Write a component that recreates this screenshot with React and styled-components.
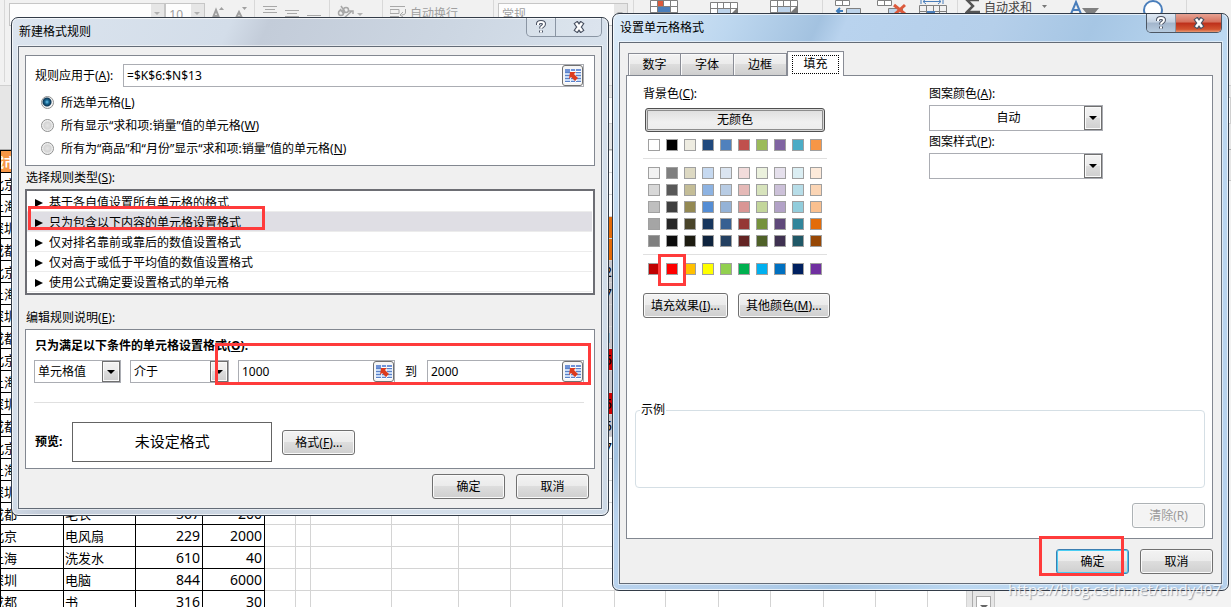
import { useState } from 'react';
import styled, { createGlobalStyle, css } from 'styled-components';

const GlobalStyle = createGlobalStyle`
  * {
    box-sizing: border-box;
  }
  body {
    margin: 0;
    overflow: hidden;
    font-family: "Noto Sans", "Noto Sans CJK SC", sans-serif;
    font-size: 12px;
    line-height: 16px;
    color: #000;
  }
  button, input, select {
    font: inherit;
    color: inherit;
    margin: 0;
  }
`;

/* ---------- workbook behind the dialogs ---------- */

const Desktop = styled.main`
  position: relative;
  height: 100vh;
  overflow: hidden;
  background: #e6e6e6;
`;

const Ribbon = styled.header`
  display: flex;
  height: 86px;
  padding-left: 4px;
  background: #f1f1f1;
  border-bottom: 1px solid #d0d0d0;
  color: #a0a0a0;
`;

const RibbonGroup = styled.div`
  display: flex;
  align-items: flex-start;
  gap: ${({ $gap }) => $gap || 0}px;
  width: ${({ $w }) => $w}px;
  height: 82px;
  padding-left: ${({ $pad }) => $pad || 4}px;
  border-left: ${({ $plain }) => ($plain ? '0' : '1px solid #d8d8d8')};
  white-space: nowrap;
  svg {
    flex: none;
  }
`;

const RibbonBox = styled.div`
  display: flex;
  justify-content: space-between;
  width: ${({ $w }) => $w}px;
  height: 23px;
  margin-top: 3px;
  padding-left: 3px;
  line-height: 22px;
  background: #fdfdfd;
  border: 1px solid #c6c6c6;
`;

const BoxArrow = styled.span`
  display: flex;
  align-items: center;
  width: 13px;
  padding-left: 3px;
  background: #e6e6e6;
  &::after {
    content: "";
    border: 3px solid transparent;
    border-top-color: #b0b0b0;
  }
`;

const RibbonLabel = styled.span`
  padding-top: ${({ $top }) => $top}px;
  color: ${({ $dark }) => ($dark ? '#444' : '#a0a0a0')};
`;

const FormulaBar = styled.div`
  height: 27px;
  margin: 11px 0 0 60px;
  background: #fff;
  border: 1px solid #d0d0d0;
`;

const ColumnHead = styled.div`
  height: 26px;
  border-bottom: 1px solid #ababab;
`;

const Work = styled.div`
  display: flex;
`;

const Sheet = styled.table`
  width: 966px;
  table-layout: fixed;
  border-collapse: collapse;
  background: #fff;
`;

const tones = {
  head: '#f79646',
  orange: '#e46c0a',
  gray: '#c9c7cc',
  red: '#d00000',
};

const Cell = styled.td`
  height: 22px;
  padding: 0 2px 0 1px;
  overflow: hidden;
  white-space: nowrap;
  font-size: ${({ $num }) => ($num ? 14 : 13)}px;
  line-height: 20px;
  text-align: ${({ $num }) => ($num ? 'right' : 'left')};
  background: ${({ $tone }) => tones[$tone] || 'transparent'};
  border: 1px solid ${({ $boxed }) => ($boxed ? '#000' : '#d4d4d4')};
  ${({ $tone }) => $tone === 'head' && css`
    color: #fff;
    font-weight: bold;
  `}
`;

const CityText = styled.span`
  display: block;
  margin-left: -11px;
`;

const ScrollTrack = styled.div`
  display: flex;
  align-items: flex-end;
  width: 23px;
  height: 462px;
  padding: 0 3px;
  background: #e6e6e6;
  border-left: 1px solid #ababab;
  border-right: 1px solid #c6c6c6;
  margin-left: 5px;
`;

const ScrollButton = styled.button`
  width: 15px;
  height: 16px;
  padding: 0;
  background: #fff;
  border: 1px solid #ababab;
`;

const FieldPane = styled.div`
  flex: 1;
  height: 432px;
  margin-top: 30px;
  background: #f3f3f3;
  border-top: 1px solid #c6c6c6;
  border-bottom: 1px solid #c6c6c6;
`;

/* ---------- window chrome ---------- */

const Window = styled.section`
  position: absolute;
  left: ${({ $x }) => $x}px;
  top: ${({ $y }) => $y}px;
  width: ${({ $w }) => $w}px;
  padding: 0 6px 6px;
  border: 1px solid #333c48;
  border-radius: 7px;
  box-shadow: inset 0 0 0 1px rgba(255, 255, 255, 0.7);
  background: ${({ $active }) => ($active
    ? 'linear-gradient(115deg, #dcebf8 0, #bdd7ef 110px, #a3c2e0 190px, #b9d3ee 215px, #b5cfea 350px, #a6c6e4 440px, #bcd8f1 560px, #b5d0ec 100%)'
    : 'linear-gradient(115deg, #dbe4ee 0, #d3dde9 200px, #c3ccd9 235px, #ccd6e2 400px, #d6e0eb 540px, #cdd9e6 100%)')};
`;

const TitleBar = styled.div`
  display: flex;
  justify-content: space-between;
  height: 28px;
`;

const Title = styled.h1`
  margin: 0;
  padding: 6px 0 0 1px;
  font-size: 12px;
  line-height: 16px;
  font-weight: normal;
`;

const Captions = styled.div`
  display: flex;
  height: 19px;
  border: 1px solid ${({ $active }) => ($active ? '#4d5764' : '#8a95a3')};
  border-top: 0;
  border-radius: 0 0 5px 5px;
  overflow: hidden;
`;

const CaptionButton = styled.button`
  display: flex;
  align-items: center;
  justify-content: center;
  width: ${({ $w }) => $w}px;
  padding: 0;
  border: 0;
  background: ${({ $tone }) => {
    if ($tone === 'red') return 'linear-gradient(#e7a293 0, #d5705c 45%, #bd2f1a 50%, #d2532f 85%, #e89b76 100%)';
    if ($tone === 'blue') return 'linear-gradient(#e0e9f3 0, #c3d1e1 45%, #a2b5cb 50%, #b7cbdf 100%)';
    return 'rgba(255, 255, 255, 0.15)';
  }};
  & + & {
    border-left: 1px solid #8a95a3;
  }
`;

const Client = styled.div`
  padding: ${({ $pad }) => $pad};
  background: #f0f0f0;
  border: 1px solid #636b76;
  box-shadow: 0 0 0 1px rgba(255, 255, 255, 0.5);
`;

const Panel = styled.div`
  padding: ${({ $pad }) => $pad};
  background: #fff;
  border: 1px solid #828790;
`;

const Footer = styled.div`
  display: flex;
  justify-content: flex-end;
  gap: 11px;
  margin-top: ${({ $top }) => $top}px;
  padding-right: ${({ $right }) => $right || 0}px;
`;

/* ---------- controls ---------- */

const Button = styled.button`
  min-width: 73px;
  height: 25px;
  padding: 1px 7px 0;
  line-height: 16px;
  white-space: nowrap;
  background: linear-gradient(#f3f3f3 0, #ebebeb 48%, #dddddd 50%, #cfcfcf 100%);
  border: 1px solid #707070;
  border-radius: 3px;
  box-shadow: inset 0 0 0 1px #fafafa;
  ${({ $default }) => $default && css`
    border-color: #3c7fb1;
    box-shadow: inset 0 0 0 1px #49cdf3;
  `}
  &:disabled {
    color: #9a9a9a;
    background: #f4f4f4;
    border-color: #adb2b5;
  }
`;

const Field = styled.div`
  position: relative;
  display: flex;
  flex: ${({ $w }) => ($w ? `0 0 ${$w}px` : '1')};
  height: ${({ $h }) => $h || 23}px;
  min-width: 0;
  background: #fff;
  border: 1px solid #abadb3;
`;

const TextInput = styled.input`
  flex: 1;
  min-width: 0;
  padding: 0 3px;
  border: 0;
  outline: 0;
  background: transparent;
`;

const Select = styled.select`
  flex: 1;
  min-width: 0;
  padding: 0 18px 0 3px;
  border: 0;
  outline: 0;
  appearance: none;
  background: transparent;
  text-align-last: ${({ $center }) => ($center ? 'center' : 'left')};
`;

/* sits over the select so that the whole field stays clickable */
const Arrow = styled.span`
  position: absolute;
  top: 0;
  right: 0;
  bottom: 0;
  display: flex;
  align-items: center;
  justify-content: center;
  width: 18px;
  pointer-events: none;
  background: linear-gradient(#f3f3f3 0, #ebebeb 48%, #dddddd 50%, #cfcfcf 100%);
  border: 1px solid #707070;
  box-shadow: inset 0 0 0 1px #fafafa;
  &::after {
    content: "";
    margin-top: 4px;
    border: 4px solid transparent;
    border-top-color: #000;
  }
`;

const PickButton = styled.button`
  display: flex;
  flex: none;
  align-items: center;
  justify-content: center;
  width: 21px;
  padding: 0;
  background: #f6f6f6;
  border: 1px solid #707070;
  border-radius: 3px;
`;

const Label = styled.label`
  display: block;
  white-space: nowrap;
`;

const Caption = styled.h2`
  margin: ${({ $top }) => $top || 0}px 0 0 1px;
  font-size: 12px;
  line-height: ${({ $line }) => $line || 23}px;
  font-weight: ${({ $bold }) => ($bold ? 'bold' : 'normal')};
  white-space: nowrap;
`;

/* ---------- rule dialog ---------- */

const ApplyRow = styled.div`
  display: flex;
  align-items: center;
  gap: 10px;
  margin-bottom: 4px;
`;

const RadioRow = styled.label`
  display: flex;
  align-items: center;
  gap: 7px;
  height: 23px;
  padding-left: 6px;
`;

const Radio = styled.input`
  appearance: none;
  width: 13px;
  height: 13px;
  border: 1px solid #8e8f8f;
  border-radius: 50%;
  background: radial-gradient(circle, #e4e4e4 0, #d4d4d4 45%, #f6f6f6 70%);
  &:checked {
    background: radial-gradient(circle at 5px 5px, #6fc8ee 0, #1a6a96 2px, #0c3553 4px, #f4f4f4 5px);
  }
`;

const RuleList = styled.ul`
  margin: 0;
  padding: 1px 1px 1px 0;
  list-style: none;
  background: #fff;
  border: 2px solid #6d6e74;
`;

const RuleItem = styled.li`
  height: 20px;
  background: ${({ $on }) => ($on ? '#dfdee4' : '#fff')};
  border-bottom: 1px solid #ececec;
`;

const RuleButton = styled.button`
  display: flex;
  align-items: center;
  gap: 6px;
  width: 100%;
  height: 20px;
  padding: 2px 8px 0;
  background: none;
  border: 0;
  svg {
    flex: none;
  }
`;

const ConditionRow = styled.div`
  display: flex;
  gap: 9px;
  margin-top: 6px;
`;

const Between = styled.div`
  display: flex;
  flex: 1;
  min-width: 0;
  align-items: center;
`;

const To = styled.span`
  width: 32px;
  text-align: center;
`;

const Rule = styled.hr`
  width: 100%;
  height: 1px;
  margin: ${({ $m }) => $m};
  border: 0;
  background: #e0e0e0;
`;

const PreviewRow = styled.div`
  display: flex;
  align-items: center;
  gap: 10px;
`;

const PreviewBox = styled.div`
  width: 200px;
  height: 40px;
  font-size: 15px;
  line-height: 36px;
  text-align: center;
  border: 1px solid #646464;
`;

/* ---------- cell format dialog ---------- */

const Tabs = styled.div`
  display: flex;
  align-items: flex-end;
  height: 24px;
  padding-left: 2px;
`;

const Tab = styled.button`
  width: 53px;
  height: 22px;
  padding: 0;
  border: 1px solid #898c95;
  border-bottom: 0;
  border-left-width: ${({ $first }) => ($first ? 1 : 0)}px;
  background: linear-gradient(#f3f3f3 0, #ebebeb 48%, #dddddd 50%, #cfcfcf 100%);
  box-shadow: inset 1px 1px 0 #fafafa;
  ${({ $on }) => $on && css`
    width: 57px;
    height: 25px;
    margin-bottom: -1px;
    padding: 3px 4px 2px;
    background: #fff;
    z-index: 1;
  `}
`;

const FocusRing = styled.span`
  display: block;
  height: 19px;
  line-height: 19px;
  ${({ $on }) => $on && css`
    border: 1px dotted #000;
    line-height: 16px;
  `}
`;

const FillColumns = styled.div`
  display: grid;
  grid-template-columns: 286px 174px;
  padding-left: 8px;
`;

const ColorColumn = styled.div`
  display: flex;
  flex-direction: column;
  align-items: flex-start;
  width: 184px;
`;

const NoColor = styled.button`
  width: 180px;
  height: 24px;
  margin: 6px 2px 7px;
  background: linear-gradient(#dcdcdc, #f0f0f0 60%, #ececec);
  border: 1px solid #505050;
  border-radius: 3px;
  box-shadow: inset 0 0 0 1px #d8d8d8, inset 0 0 0 2px #8c8c8c;
  line-height: 16px;
`;

const Swatches = styled.div`
  display: grid;
  grid-template-columns: repeat(10, 12px);
  gap: 5px 6px;
  padding-left: 5px;
`;

const Swatch = styled.button`
  height: 12px;
  padding: 0;
  border: 1px solid #a0a0a0;
  background: ${({ $color }) => $color};
`;

const MoreRow = styled.div`
  display: flex;
  gap: 10px;
  margin-top: 18px;
`;

const PatternColumn = styled.div`
  display: flex;
  flex-direction: column;
  gap: 3px;
`;

const Sample = styled.fieldset`
  height: 86px;
  margin: 84px 0 15px;
  padding: 0 4px;
  border: 1px solid #d5dfe5;
  border-radius: 4px;
  legend {
    padding: 0 1px;
  }
`;

/* ---------- marks over the windows ---------- */

const Mark = styled.div`
  position: absolute;
  left: ${({ $x }) => $x}px;
  top: ${({ $y }) => $y}px;
  width: ${({ $w }) => $w}px;
  height: ${({ $h }) => $h}px;
  border: 3px solid #ff3b3b;
  pointer-events: none;
`;

const Watermark = styled.div`
  position: absolute;
  right: 10px;
  bottom: 6px;
  font-family: "Open Sans", sans-serif;
  font-size: 15px;
  line-height: 24px;
  color: rgba(255, 255, 255, 0.85);
  text-shadow: 1px 1px 1px rgba(110, 120, 135, 0.7);
  pointer-events: none;
`;

const HelpIcon = () => (
  <svg width="12" height="14" viewBox="0 0 12 14" fill="none">
    <path d="M3 5V4q0-2 3-2t3 2q0 1.500-1.500 2.300T6 8.500M6 10.500v2" stroke="#4b5363" strokeWidth="4" />
    <path d="M3 5V4q0-2 3-2t3 2q0 1.500-1.500 2.300T6 8.500M6 10.500v2" stroke="#fff" strokeWidth="2" />
  </svg>
);

const CloseIcon = () => (
  <svg width="14" height="12" viewBox="0 0 14 12" fill="none">
    <path d="M3.500 1l7 10M10.500 1l-7 10" stroke="#4b5363" strokeWidth="5" />
    <path d="M4 2l6 8M10 2l-6 8" stroke="#fff" strokeWidth="2.600" />
  </svg>
);

const RangeIcon = () => (
  <svg width="16" height="14" viewBox="0 0 16 14">
    <path d="M0 0h16v14H0z" fill="#fff" />
    <path d="M0 0h5v3H0zM6 0h4v2H6zM11 0h5v2h-5z" fill="#6f92d6" />
    <path d="M0 4h5v2H0zM0 7h5v2H0zM0 10h5v2H0zM11 4h5v2h-5zM12 7h4v2h-4zM6 10h4v2H6zM12 10h4v2h-4z" fill="#c7daf5" />
    <path d="M0 3.500h16M0 6.500h16M0 9.500h16M0 12.500h16" stroke="#5b82c9" fill="none" />
    <path d="M5.500 0v14M10.500 0v14" stroke="#e9f0fb" fill="none" />
    <path d="M5 3h6l-2 2 4 4-3 3-4-4-2 2z" fill="#dc3b1e" />
  </svg>
);

const Triangle = () => (
  <svg width="8" height="8" viewBox="0 0 8 8"><path d="M0 0l8 4-8 4z" fill="#000" /></svg>
);

const GrowIcon = ({ down }) => (
  <svg width="14" height="20" viewBox="0 0 14 20" fill="none" stroke="#a0a0a0">
    <path d={down ? 'M1 20l4-8 4 8M2 17h6' : 'M1 20l4-10 4 10M2 16h6'} strokeWidth="2" />
    <path d={down ? 'M8 7h5l-2.500 3z' : 'M8 10h5l-2.500-3z'} fill="#a0a0a0" stroke="none" />
  </svg>
);

const LinesIcon = ({ top }) => (
  <svg width="14" height="24" viewBox="0 0 14 24" stroke="#a8a8a8">
    <path d={`M0 ${top}.500h14M2 ${top + 3}.500h10M0 ${top + 6}.500h14`} />
  </svg>
);

const AngleIcon = () => (
  <svg width="26" height="20" viewBox="0 0 26 20" fill="none" stroke="#a8a8a8" strokeWidth="1.500">
    <circle cx="4" cy="13" r="2.500" /><path d="M7 14L3 9" />
    <circle cx="9" cy="10" r="2.500" /><path d="M8 12L4 6M6 19L15 11M12 11h4v3" />
    <path d="M20 13h6l-3 3z" fill="#b4b4b4" stroke="none" />
  </svg>
);

const WrapIcon = () => (
  <svg width="17" height="20" viewBox="0 0 17 20" fill="none" stroke="#a8a8a8">
    <path d="M0 6.500h15M0 9.500h9v4H0zM0 16.500h9M15.500 9v4q0 2-4 2M13 12l-3 3 3 2" />
  </svg>
);

const GridIcon = ({ colors, mark, top = 0 }) => (
  <svg width="28" height="14" viewBox={`0 ${-top} 28 14`}>
    <path d="M1 1h26v13H1z" fill="#fff" />
    <path d="M8 7h12v7H8z" fill={colors[0]} />
    <path d="M8 1h5v5H8z" fill={colors[1]} />
    <path d="M.5 14V.5h27V14M1 6.500h26M1 12.500h26M7.500 1v13M13.500 1v5M20.500 1v13" fill="none" stroke="#808080" />
    {mark && <path d="M28 5v9h-9z" fill="#777" />}
  </svg>
);

const CellsIcon = ({ kind }) => (
  <svg width="30" height="14" viewBox="0 0 30 14" fill="none">
    <path d="M.5.500h14v5H.5zM7.500 0v5" stroke="#808080" fill="#fff" />
    <path d="M11.500 8.500h14V14h-14z" stroke="#808080" fill="#bdd3ea" />
    {kind === 'insert' && <path d="M8 11H2m3-3l-3 3 3 3" stroke="#3f7dbd" strokeWidth="2" />}
    {kind === 'delete' && <path d="M17 5l11 9M28 5L18 14" stroke="#dc5a3c" strokeWidth="3" />}
  </svg>
);

const FormatIcon = () => (
  <svg width="28" height="14" viewBox="0 0 28 14" fill="none">
    <path d="M.5 14V5.500h27V14M0 11.500h28M7.500 5v9M14.500 5v7M20.500 5v9" stroke="#808080" />
    <path d="M8 11h8v3H8z" fill="#4a7ebb" />
    <path d="M2 0v4M24 0v4M4 1.500h18M7-1L4 1.500 7 4M19-1l3 2.500L19 4" stroke="#4a7ebb" />
  </svg>
);

const SigmaIcon = () => (
  <svg width="15" height="14" viewBox="0 0 15 14" fill="none" stroke="#555" strokeWidth="2.500">
    <path d="M14 0H2l6 6-6 6h13" />
  </svg>
);

const DownIcon = () => (
  <svg width="5" height="14" viewBox="0 0 5 14"><path d="M0 5h5L2.500 8z" fill="#777" /></svg>
);

const SortIcon = () => (
  <svg width="30" height="14" viewBox="0 0 30 14" fill="none">
    <path d="M1 14L6 2l5 12M3 10h6" stroke="#4a7ebb" strokeWidth="2" />
    <path d="M12 8h17l-5 6h-7z" fill="#808080" />
  </svg>
);

const FindIcon = () => (
  <svg width="20" height="14" viewBox="0 0 20 14"><circle cx="10" cy="10" r="9" fill="#fff" stroke="#4a7ebb" strokeWidth="2" /></svg>
);

const cities = ['北京', '上海', '深圳', '成都'];

const products = {
  15: ['毛衣', 567, 200],
  16: ['电风扇', 229, 2000],
  17: ['洗发水', 610, 40],
  18: ['电脑', 844, 6000],
  19: ['书', 316, 30],
};

const totals = {
  2: ['orange'],
  3: ['orange'],
  4: ['gray', 2],
  5: ['gray', 7],
  6: ['gray'],
  7: ['gray', 1],
  8: ['red', 5],
  9: ['gray'],
  10: ['red', 5],
  11: ['gray', 5],
  12: ['', 7],
};

const columnWidths = [63, 72, 67, 62, 31, 15, 81, 67, 52, 52, 52, 51, 53, 52, 53, 52, 52, 39];

const ruleTypes = [
  '基于各自值设置所有单元格的格式',
  '只为包含以下内容的单元格设置格式',
  '仅对排名靠前或靠后的数值设置格式',
  '仅对高于或低于平均值的数值设置格式',
  '使用公式确定要设置格式的单元格',
];

const themeColors = ['#ffffff', '#000000', '#eeece1', '#1f497d', '#4f81bd', '#c0504d', '#9bbb59', '#8064a2', '#4bacc6', '#f79646'];

const tintColors = [
  '#f2f2f2', '#7f7f7f', '#ddd9c3', '#c6d9f0', '#dbe5f1', '#f2dcdb', '#ebf1dd', '#e5e0ec', '#dbeef3', '#fdeada',
  '#d8d8d8', '#595959', '#c4bd97', '#8db3e2', '#b8cce4', '#e5b9b7', '#d7e3bc', '#ccc1d9', '#b7dde8', '#fbd5b5',
  '#bfbfbf', '#3f3f3f', '#938953', '#548dd4', '#95b3d7', '#d99694', '#c3d69b', '#b2a2c7', '#92cddc', '#fac08f',
  '#a5a5a5', '#262626', '#494429', '#17365d', '#366092', '#953734', '#76923c', '#5f497a', '#31859b', '#e36c09',
  '#7f7f7f', '#0c0c0c', '#1d1b10', '#0f243e', '#244061', '#632423', '#4f6128', '#3f3151', '#205867', '#974806',
];

const standardColors = ['#c00000', '#ff0000', '#ffc000', '#ffff00', '#92d050', '#00b050', '#00b0f0', '#0070c0', '#002060', '#7030a0'];

const tabs = ['数字', '字体', '边框', '填充'];

function Workbook() {
  const blanks = columnWidths.slice(4);
  return (
    <>
      <Ribbon>
        <RibbonGroup $w={250}>
          <RibbonBox $w={157}><span /><BoxArrow /></RibbonBox>
          <RibbonBox $w={40}><span>10</span><BoxArrow /></RibbonBox>
          <RibbonGroup $plain $w={49} $gap={9} $pad={6}>
            <GrowIcon />
            <GrowIcon down />
          </RibbonGroup>
        </RibbonGroup>
        <RibbonGroup $w={75} $gap={8} $pad={8}>
          <LinesIcon top={6} />
          <LinesIcon top={10} />
          <LinesIcon top={15} />
        </RibbonGroup>
        <RibbonGroup $w={53} $pad={7}><AngleIcon /></RibbonGroup>
        <RibbonGroup $w={111} $gap={3} $pad={7}>
          <WrapIcon />
          <RibbonLabel $top={6}>自动换行</RibbonLabel>
        </RibbonGroup>
        <RibbonGroup $w={140}>
          <RibbonBox $w={130}><span>常规</span><BoxArrow /></RibbonBox>
        </RibbonGroup>
        <RibbonGroup $w={189} $gap={32} $pad={16}>
          <GridIcon colors={['#4a7ebb', '#dc5a3c']} />
          <GridIcon colors={['#bdd3ea', '#fff']} mark top={2} />
          <GridIcon colors={['#bdd3ea', '#fff']} mark />
        </RibbonGroup>
        <RibbonGroup $w={135} $gap={12} $pad={12}>
          <CellsIcon kind="insert" />
          <CellsIcon kind="delete" />
          <FormatIcon />
        </RibbonGroup>
        <RibbonGroup $w={229} $gap={4} $pad={7}>
          <SigmaIcon />
          <RibbonLabel $dark>自动求和</RibbonLabel>
          <RibbonGroup $plain $w={150} $gap={23} $pad={6}>
            <DownIcon />
            <SortIcon />
            <RibbonGroup $plain $w={50} $pad={20}><FindIcon /></RibbonGroup>
          </RibbonGroup>
        </RibbonGroup>
        <RibbonGroup $w={40} />
      </Ribbon>
      <FormulaBar />
      <ColumnHead />
      <Work>
        <Sheet>
          <colgroup>
            {columnWidths.map((w, i) => <col key={i} style={{ width: w }} />)}
          </colgroup>
          <tbody>
            <tr>
              <Cell $tone="head" $boxed><CityText>城市</CityText></Cell>
              {columnWidths.slice(1).map((w, i) => <Cell key={i} />)}
            </tr>
            {Array.from({ length: 20 }, (_, row) => {
              const [name, price, count] = products[row] || [];
              const [tone, total] = totals[row] || [];
              return (
                <tr key={row}>
                  <Cell $boxed><CityText>{cities[row % 4]}</CityText></Cell>
                  <Cell $boxed>{name}</Cell>
                  <Cell $boxed $num>{price}</Cell>
                  <Cell $boxed $num>{count}</Cell>
                  {blanks.map((w, i) => (
                    <Cell key={i} $num $tone={i === 6 ? tone : ''}>{i === 6 ? total : ''}</Cell>
                  ))}
                </tr>
              );
            })}
          </tbody>
        </Sheet>
        <ScrollTrack>
          <ScrollButton><svg width="8" height="4"><path d="M0 0h8L4 4z" fill="#666" /></svg></ScrollButton>
        </ScrollTrack>
        <FieldPane />
      </Work>
    </>
  );
}

function RuleDialog() {
  const [scope, setScope] = useState(0);
  const [type, setType] = useState(1);
  const scopes = [
    <>所选单元格(<u>L</u>)</>,
    <>所有显示“求和项:销量”值的单元格(<u>W</u>)</>,
    <>所有为“商品”和“月份”显示“求和项:销量”值的单元格(<u>N</u>)</>,
  ];

  return (
    <Window $x={11} $y={17} $w={598}>
      <TitleBar>
        <Title>新建格式规则</Title>
        <Captions>
          <CaptionButton $w={28}><HelpIcon /></CaptionButton>
          <CaptionButton $w={46}><CloseIcon /></CaptionButton>
        </Captions>
      </TitleBar>
      <Client $pad="8px 6px 9px">
        <Panel $pad="8px 10px 5px 9px">
          <ApplyRow>
            <Label htmlFor="range">规则应用于(<u>A</u>):</Label>
            <Field>
              <TextInput id="range" defaultValue="=$K$6:$N$13" />
              <PickButton><RangeIcon /></PickButton>
            </Field>
          </ApplyRow>
          {scopes.map((text, i) => (
            <RadioRow key={i}>
              <Radio type="radio" name="scope" checked={scope === i} onChange={() => setScope(i)} />
              <span>{text}</span>
            </RadioRow>
          ))}
        </Panel>
        <Caption>选择规则类型(<u>S</u>):</Caption>
        <RuleList>
          {ruleTypes.map((text, i) => (
            <RuleItem key={text} $on={type === i}>
              <RuleButton onClick={() => setType(i)}><Triangle />{text}</RuleButton>
            </RuleItem>
          ))}
        </RuleList>
        <Caption $top={12} $line={22}>编辑规则说明(<u>E</u>):</Caption>
        <Panel $pad="8px 10px 6px 8px">
          <Caption $bold $line={16}>只为满足以下条件的单元格设置格式(<u>O</u>):</Caption>
          <ConditionRow>
            <Field $w={87}>
              <Select aria-label="单元格值"><option>单元格值</option></Select>
              <Arrow />
            </Field>
            <Field $w={99}>
              <Select aria-label="介于"><option>介于</option></Select>
              <Arrow />
            </Field>
            <Between>
              <Field>
                <TextInput aria-label="1000" defaultValue="1000" />
                <PickButton><RangeIcon /></PickButton>
              </Field>
              <To>到</To>
              <Field>
                <TextInput aria-label="2000" defaultValue="2000" />
                <PickButton><RangeIcon /></PickButton>
              </Field>
            </Between>
          </ConditionRow>
          <Rule $m="19px 0" />
          <PreviewRow>
            <Caption $bold $line={16}>预览:</Caption>
            <PreviewBox>未设定格式</PreviewBox>
            <Button>格式(<u>F</u>)...</Button>
          </PreviewRow>
        </Panel>
        <Footer $top={5} $right={6}>
          <Button>确定</Button>
          <Button>取消</Button>
        </Footer>
      </Client>
    </Window>
  );
}

function SwatchGrid({ colors }) {
  return (
    <Swatches>
      {colors.map((color, i) => <Swatch key={i} $color={color} aria-label={color} />)}
    </Swatches>
  );
}

function FormatDialog() {
  const [tab, setTab] = useState(3);

  return (
    <Window $x={612} $y={13} $w={617} $active>
      <TitleBar>
        <Title>设置单元格格式</Title>
        <Captions $active>
          <CaptionButton $w={28} $tone="blue"><HelpIcon /></CaptionButton>
          <CaptionButton $w={46} $tone="red"><CloseIcon /></CaptionButton>
        </Captions>
      </TitleBar>
      <Client $pad="8px 8px 9px 6px">
        <Tabs role="tablist">
          {tabs.map((name, i) => (
            <Tab key={name} role="tab" $first={i === 0 || i === 3} $on={tab === i} onClick={() => setTab(i)}>
              <FocusRing $on={tab === i}>{name}</FocusRing>
            </Tab>
          ))}
        </Tabs>
        <Panel $pad="10px 7px 10px 8px">
          <FillColumns>
            <ColorColumn>
              <span>背景色(<u>C</u>):</span>
              <NoColor>无颜色</NoColor>
              <SwatchGrid colors={themeColors} />
              <Rule $m="7px 0 8px" />
              <SwatchGrid colors={tintColors} />
              <Rule $m="7px 0 8px" />
              <SwatchGrid colors={standardColors} />
              <MoreRow>
                <Button>填充效果(<u>I</u>)...</Button>
                <Button>其他颜色(<u>M</u>)...</Button>
              </MoreRow>
            </ColorColumn>
            <PatternColumn>
              <Label htmlFor="patternColor">图案颜色(<u>A</u>):</Label>
              <Field $w={26} $h={26}>
                <Select id="patternColor" $center><option>自动</option></Select>
                <Arrow />
              </Field>
              <Label htmlFor="patternStyle">图案样式(<u>P</u>):</Label>
              <Field $w={26} $h={26}>
                <Select id="patternStyle"><option /></Select>
                <Arrow />
              </Field>
            </PatternColumn>
          </FillColumns>
          <Sample>
            <legend>示例</legend>
          </Sample>
          <Footer $top={0}>
            <Button disabled>清除(R)</Button>
          </Footer>
        </Panel>
        <Footer $top={10}>
          <Button $default>确定</Button>
          <Button>取消</Button>
        </Footer>
      </Client>
    </Window>
  );
}

export default function App() {
  return (
    <Desktop>
      <GlobalStyle />
      <Workbook />
      <RuleDialog />
      <FormatDialog />
      <Mark $x={28} $y={206} $w={237} $h={24} />
      <Mark $x={215} $y={343} $w={376} $h={42} />
      <Mark $x={658} $y={254} $w={28} $h={32} />
      <Mark $x={1039} $y={536} $w={85} $h={40} />
      <Watermark>https://blog.csdn.net/cindy407</Watermark>
    </Desktop>
  );
}
